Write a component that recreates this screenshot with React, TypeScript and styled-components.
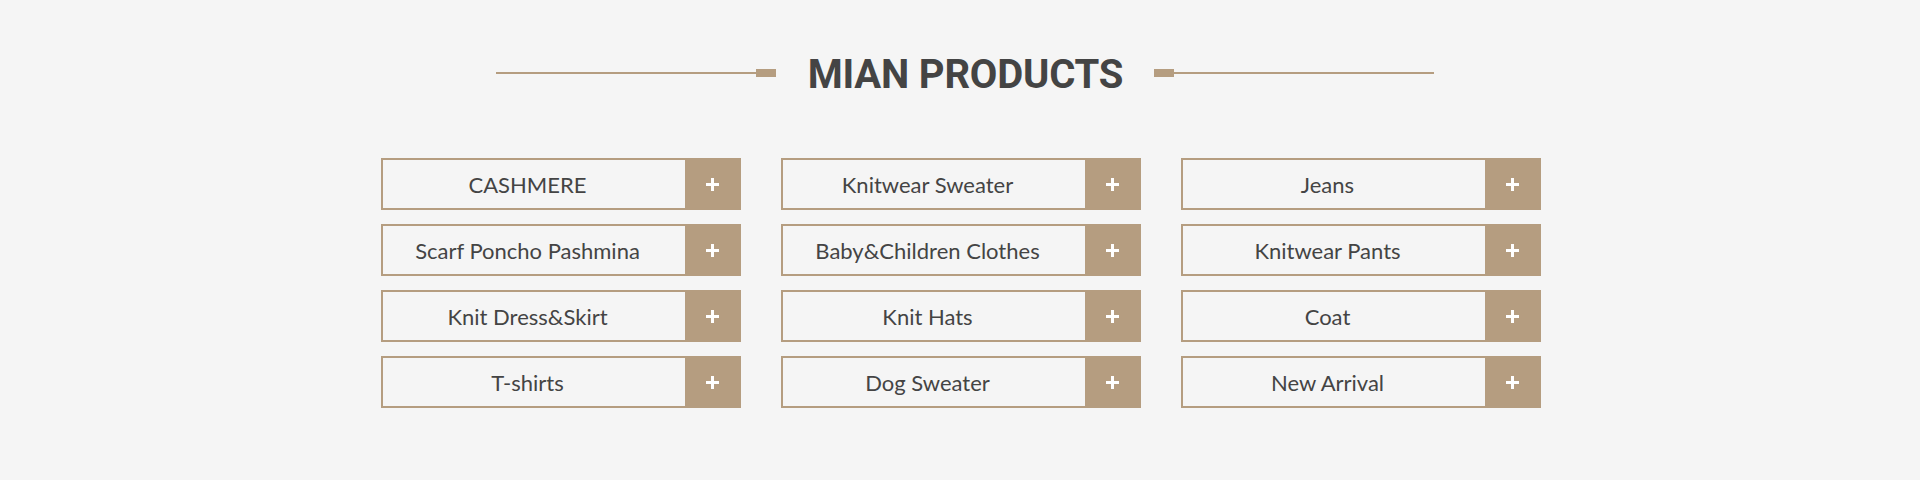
import styled, { createGlobalStyle } from "styled-components";

const GlobalStyle = createGlobalStyle`
    html, body {
        margin: 0;
        padding: 0;
        background: #f5f5f5;
    }
    body {
        font-family: "Lato", "Liberation Sans", sans-serif;
    }
`;

const Section = styled.section`
    width: 1920px;
    height: 480px;
    background: #f5f5f5;
    padding-top: 50px;
    box-sizing: border-box;
`;

const TitleRow = styled.div`
    display: flex;
    align-items: center;
    justify-content: center;
    height: 46px;
    padding-left: 10px;
`;

const Line = styled.span`
    width: 260px;
    height: 2px;
    background: #b59d80;
`;

const Square = styled.span`
    width: 20px;
    height: 8px;
    background: #b59d80;
`;

const Title = styled.h2`
    margin: 0 31px 0 32px;
    padding-top: 3px;
    font-family: "Roboto", "Liberation Sans", sans-serif;
    font-weight: 700;
    font-size: 40px;
    line-height: 46px;
    color: #444;
    letter-spacing: -0.2px;
`;

const Grid = styled.div`
    display: grid;
    grid-template-columns: repeat(3, 360px);
    column-gap: 40px;
    row-gap: 14px;
    width: 1160px;
    margin: 62px auto 0;
    padding-left: 1px;
`;

const Item = styled.a`
    display: flex;
    height: 52px;
    box-sizing: border-box;
    border: 2px solid #b59d80;
    text-decoration: none;
    cursor: pointer;
`;

const Label = styled.span`
    flex: 1;
    display: flex;
    align-items: center;
    justify-content: center;
    padding-right: 12px;
    padding-top: 1px;
    font-size: 22px;
    color: #444;
`;

const Plus = styled.span`
    width: 54px;
    display: flex;
    align-items: center;
    justify-content: center;
    background: #b59d80;
    padding-left: 2px;
    box-sizing: border-box;
`;

const items = [
    "CASHMERE",
    "Knitwear Sweater",
    "Jeans",
    "Scarf Poncho Pashmina",
    "Baby&Children Clothes",
    "Knitwear Pants",
    "Knit Dress&Skirt",
    "Knit Hats",
    "Coat",
    "T-shirts",
    "Dog Sweater",
    "New Arrival",
];

function PlusIcon() {
    return (
        <svg width="13" height="13" viewBox="0 0 13 13">
            <rect x="0" y="5" width="13" height="3" fill="#fff" />
            <rect x="5" y="0" width="3" height="13" fill="#fff" />
        </svg>
    );
}

function App() {
    return (
        <>
            <GlobalStyle />
            <Section>
                <TitleRow>
                    <Line />
                    <Square />
                    <Title>MIAN PRODUCTS</Title>
                    <Square />
                    <Line />
                </TitleRow>
                <Grid>
                    {items.map((name) => (
                        <Item key={name}>
                            <Label>{name}</Label>
                            <Plus>
                                <PlusIcon />
                            </Plus>
                        </Item>
                    ))}
                </Grid>
            </Section>
        </>
    );
}

export default App;
